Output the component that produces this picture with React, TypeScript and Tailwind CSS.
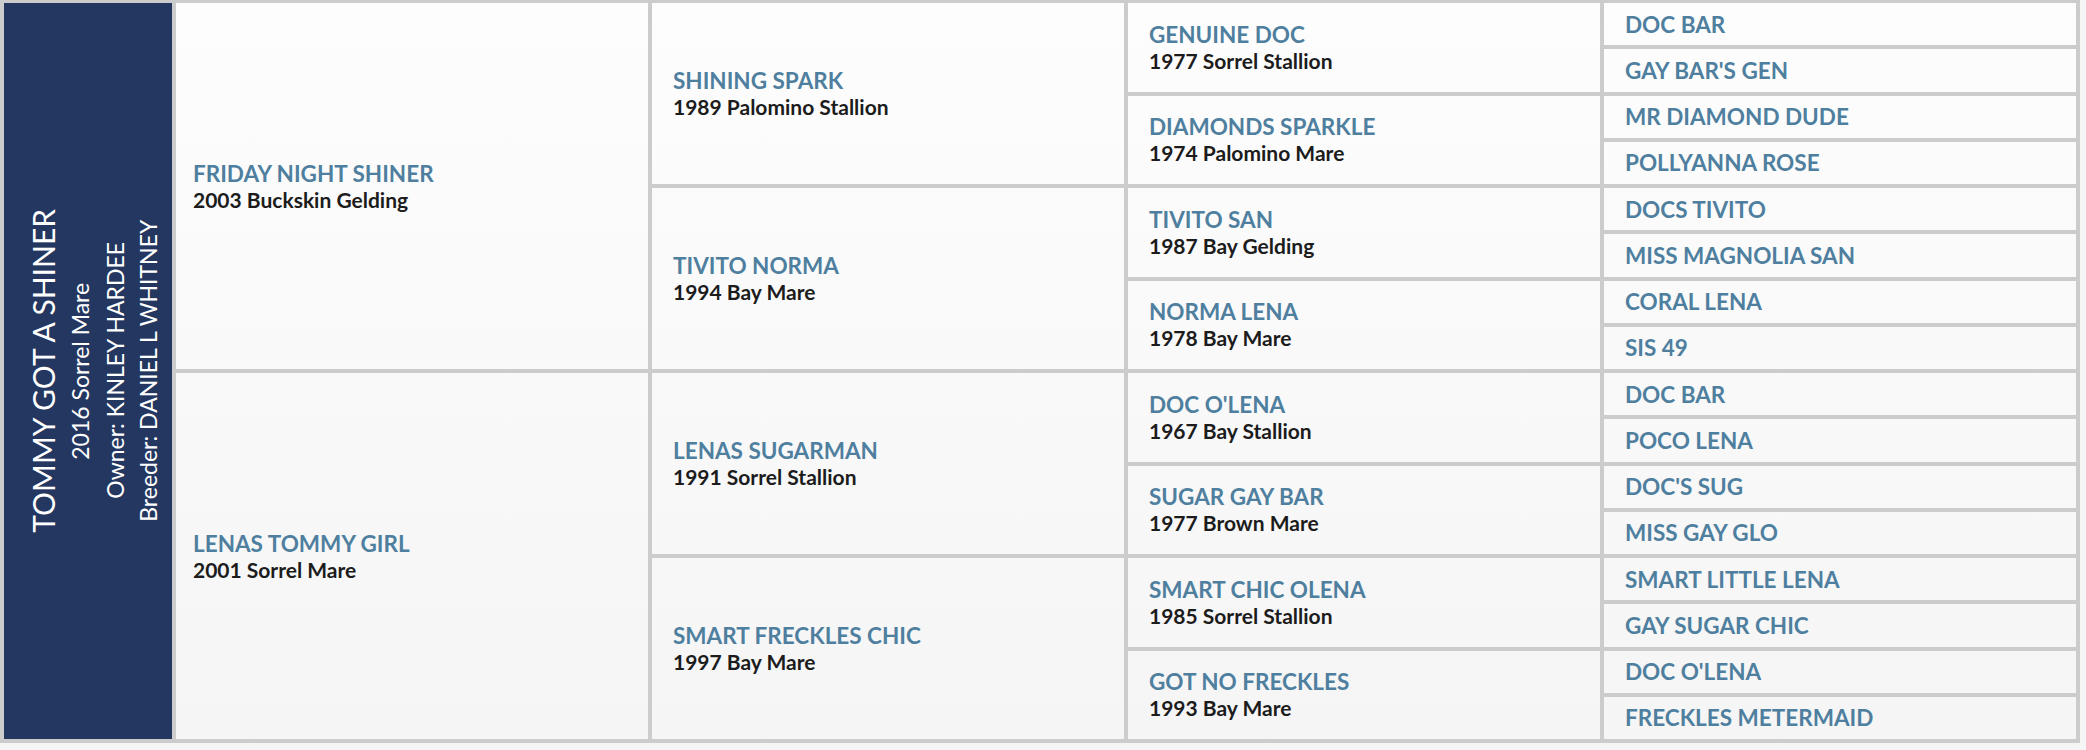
import React from "react";

type Horse = { name: string; info?: string };

const sire: Horse = { name: "FRIDAY NIGHT SHINER", info: "2003 Buckskin Gelding" };
const dam: Horse = { name: "LENAS TOMMY GIRL", info: "2001 Sorrel Mare" };

const gen3: Horse[] = [
  { name: "SHINING SPARK", info: "1989 Palomino Stallion" },
  { name: "TIVITO NORMA", info: "1994 Bay Mare" },
  { name: "LENAS SUGARMAN", info: "1991 Sorrel Stallion" },
  { name: "SMART FRECKLES CHIC", info: "1997 Bay Mare" },
];

const gen4: Horse[] = [
  { name: "GENUINE DOC", info: "1977 Sorrel Stallion" },
  { name: "DIAMONDS SPARKLE", info: "1974 Palomino Mare" },
  { name: "TIVITO SAN", info: "1987 Bay Gelding" },
  { name: "NORMA LENA", info: "1978 Bay Mare" },
  { name: "DOC O'LENA", info: "1967 Bay Stallion" },
  { name: "SUGAR GAY BAR", info: "1977 Brown Mare" },
  { name: "SMART CHIC OLENA", info: "1985 Sorrel Stallion" },
  { name: "GOT NO FRECKLES", info: "1993 Bay Mare" },
];

const gen5: string[] = [
  "DOC BAR",
  "GAY BAR'S GEN",
  "MR DIAMOND DUDE",
  "POLLYANNA ROSE",
  "DOCS TIVITO",
  "MISS MAGNOLIA SAN",
  "CORAL LENA",
  "SIS 49",
  "DOC BAR",
  "POCO LENA",
  "DOC'S SUG",
  "MISS GAY GLO",
  "SMART LITTLE LENA",
  "GAY SUGAR CHIC",
  "DOC O'LENA",
  "FRECKLES METERMAID",
];

const cellBg =
  "bg-fixed bg-linear-to-b from-[#fdfdfd] to-[#f5f5f5] flex flex-col justify-center";

const HorseCell: React.FC<{ horse: Horse; span: string; pad: string }> = ({
  horse,
  span,
  pad,
}) => (
  <div className={`${cellBg} ${span} ${pad}`}>
    <div className="text-[22.5px] leading-[27px] font-bold text-[#4f7f9f]">
      {horse.name}
    </div>
    {horse.info && (
      <div className="text-[21px] leading-[26px] font-bold text-[#1c1c1c]">
        {horse.info}
      </div>
    )}
  </div>
);

export default function App() {
  return (
    <div className="min-h-[750px] bg-[#f5f5f5] font-['Lato','Liberation_Sans',sans-serif]">
      <div className="grid h-[743px] w-[2080px] grid-flow-col grid-cols-[168px_repeat(4,minmax(0,1fr))] grid-rows-[repeat(16,minmax(0,1fr))] gap-[4px] bg-[#cccccc] px-[4px] pt-[3px] pb-[4px]">
        {/* Subject */}
        <div className="row-span-16 flex items-center justify-center bg-[#243760] pl-[12px] text-white">
          <div className="rotate-180 text-center [writing-mode:vertical-rl]">
            <div className="text-[30px] leading-[40px] font-normal">TOMMY GOT A SHINER</div>
            <div className="text-[23px] leading-[35px] font-normal">2016 Sorrel Mare</div>
            <div className="text-[23px] leading-[34px] font-normal">Owner: KINLEY HARDEE</div>
            <div className="text-[23px] leading-[33px] font-normal">Breeder: DANIEL L WHITNEY</div>
          </div>
        </div>

        {/* Parents */}
        <HorseCell horse={sire} span="row-span-8" pad="px-[17px]" />
        <HorseCell horse={dam} span="row-span-8" pad="px-[17px]" />

        {/* Grandparents */}
        {gen3.map((h) => (
          <HorseCell key={h.name} horse={h} span="row-span-4" pad="px-[21px]" />
        ))}

        {/* Great-grandparents */}
        {gen4.map((h) => (
          <HorseCell key={h.name} horse={h} span="row-span-2" pad="px-[21px]" />
        ))}

        {/* Great-great-grandparents */}
        {gen5.map((n, i) => (
          <HorseCell key={i} horse={{ name: n }} span="row-span-1" pad="px-[21px]" />
        ))}
      </div>
    </div>
  );
}
